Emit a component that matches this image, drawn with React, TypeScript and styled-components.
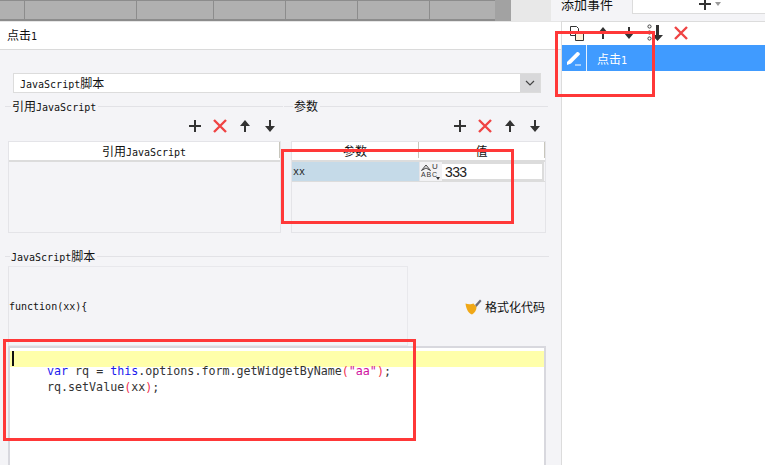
import React from 'react';
import styled, { createGlobalStyle } from 'styled-components';

const GlobalStyle = createGlobalStyle`
  html, body {
    margin: 0;
    padding: 0;
    background: #fff;
  }
  * {
    box-sizing: border-box;
  }
`;

const rulerCells = [25, 112, 77, 72, 72, 72, 65];

const PlusIcon = () => (
  <svg width='16' height='16' viewBox='0 0 16 16'>
    <path d='M2 8h12M8 2v12' stroke='#333' strokeWidth='2' fill='none' />
  </svg>
);

const CrossIcon = () => (
  <svg width='16' height='16' viewBox='0 0 16 16'>
    <path d='M2 2l12 12M14 2L2 14' stroke='#ef4444' strokeWidth='2.4' fill='none' />
  </svg>
);

const UpIcon = () => (
  <svg width='16' height='16' viewBox='0 0 16 16'>
    <path d='M8 2l5 6H9v6H7V8H3z' fill='#333' />
  </svg>
);

const DownIcon = () => (
  <svg width='16' height='16' viewBox='0 0 16 16'>
    <path d='M7 2h2v6h4l-5 6-5-6h4z' fill='#333' />
  </svg>
);

const CopyIcon = () => (
  <svg width='16' height='16' viewBox='0 0 16 16'>
    <path d='M1.5 1.5h6l2 2v7h-8z' fill='#fff' stroke='#333' />
    <path d='M6.5 6.5h8v9h-8z' fill='#fdf1d8' stroke='#333' />
  </svg>
);

const BottomIcon = () => (
  <svg width='16' height='18' viewBox='0 0 16 18'>
    <circle cx='2.5' cy='2.5' r='1.6' fill='none' stroke='#444' />
    <circle cx='2.5' cy='8.5' r='1.6' fill='none' stroke='#444' />
    <circle cx='2.5' cy='14.5' r='1.6' fill='none' stroke='#444' />
    <path d='M9 1h3v10h4l-5.5 6L5 11h4z' fill='#333' />
  </svg>
);

const PenIcon = () => (
  <svg width='16' height='16' viewBox='0 0 16 16'>
    <path d='M1 12L10.5 2.5c1-1 3.6 0 3.4 2L5 13.6 1 15z' fill='#fff' />
    <path d='M9 15h6' stroke='#fff' strokeWidth='1' />
  </svg>
);

const ChevronIcon = () => (
  <svg width='10' height='6' viewBox='0 0 10 6'>
    <path d='M1 1l4 4 4-4' stroke='#444' strokeWidth='1.2' fill='none' />
  </svg>
);

const BroomIcon = () => (
  <svg width='17' height='17' viewBox='0 0 17 17'>
    <path d='M10 7l5-5.5 1.5 1.5L11.5 9z' fill='#6d6d78' />
    <path d='M0.5 5.5C4 7 7 6 8.5 5.5l3 3.5c0 3-1.5 6-4.5 7.5C4 16 1 11 0.5 5.5z' fill='#f0a818' />
  </svg>
);

const App = () => {
  return (
    <Page>
      <GlobalStyle />
      <TopStrip>
        <Ruler>
          {rulerCells.map((width, index) => (
            <RulerCell key={index} $width={width} />
          ))}
        </Ruler>
        <DarkEnd />
        <LightEnd />
        <TabArea>
          <TabRow>
            <TabTitle>添加事件</TabTitle>
            <TabAdd>
              <PlusIcon />
              <TabCaret />
            </TabAdd>
          </TabRow>
        </TabArea>
      </TopStrip>

      <Body>
        <MainPanel>
          <TitleRow>
            点击<Mono>1</Mono>
          </TitleRow>

          <Form>
            <Dropdown>
              <DropdownText>
                <Mono>JavaScript</Mono>脚本
              </DropdownText>
              <DropdownArrow>
                <ChevronIcon />
              </DropdownArrow>
            </Dropdown>

            <Columns>
              <Column>
                <SectionTitle $lead={6}>
                  <span>
                    引用<Mono>JavaScript</Mono>
                  </span>
                </SectionTitle>
                <Toolbar>
                  <PlusIcon />
                  <CrossIcon />
                  <UpIcon />
                  <DownIcon />
                </Toolbar>
                <Table $left={3}>
                  <TableHead>
                    <HeadCell $flex={1}>
                      <span>
                        引用<Mono>JavaScript</Mono>
                      </span>
                    </HeadCell>
                  </TableHead>
                </Table>
              </Column>

              <Column>
                <SectionTitle $lead={9}>
                  <span>参数</span>
                </SectionTitle>
                <Toolbar>
                  <PlusIcon />
                  <CrossIcon />
                  <UpIcon />
                  <DownIcon />
                </Toolbar>
                <Table $left={7}>
                  <TableHead>
                    <HeadCell $width={127}>参数</HeadCell>
                    <HeadCell $width={126}>值</HeadCell>
                  </TableHead>
                  <ParamRow>
                    <ParamName>
                      <Mono>xx</Mono>
                    </ParamName>
                    <TypeCell>
                      <TypeTop>
                        <svg width='11' height='7' viewBox='0 0 11 7'>
                          <path d='M0.5 6.5L5 1l4.5 5.5L5 4z' fill='none' stroke='#444' />
                        </svg>
                        <span>U</span>
                      </TypeTop>
                      <TypeText>ABC</TypeText>
                      <TypeCaret />
                    </TypeCell>
                    <ParamValue>333</ParamValue>
                  </ParamRow>
                </Table>
              </Column>
            </Columns>

            <ScriptTitle $lead={5}>
              <span>
                <Mono>JavaScript</Mono>脚本
              </span>
            </ScriptTitle>

            <ScriptHead>
              <FunctionBox>
                <Mono>function(xx){'{'}</Mono>
              </FunctionBox>
              <FormatButton>
                <BroomIcon />
                格式化代码
              </FormatButton>
            </ScriptHead>

            <Editor>
              <ActiveLine>
                <Cursor />
              </ActiveLine>
              <CodeLine>
                <Keyword>var</Keyword> rq = <Keyword>this</Keyword>.options.form.getWidgetByName
                <Paren>(</Paren>
                <Str>"aa"</Str>
                <Paren>)</Paren>;
              </CodeLine>
              <CodeLine>
                rq.setValue<Paren>(</Paren>xx<Paren>)</Paren>;
              </CodeLine>
            </Editor>
          </Form>
        </MainPanel>

        <SidePanel>
          <SideToolbar>
            <CopyIcon />
            <UpIcon />
            <DownIcon />
            <BottomIcon />
            <CrossIcon />
          </SideToolbar>
          <EventRow>
            <EventIcon>
              <PenIcon />
            </EventIcon>
            <EventName>
              点击<Mono>1</Mono>
            </EventName>
          </EventRow>
        </SidePanel>
      </Body>

      <RedMark $x={555} $y={31} $w={100} $h={66} />
      <RedMark $x={281} $y={149} $w={233} $h={75} />
      <RedMark $x={3} $y={339} $w={413} $h={102} />
    </Page>
  );
};

const Page = styled.div`
  position: relative;
  width: 765px;
  height: 465px;
  overflow: hidden;
  display: flex;
  flex-direction: column;
  background: #fff;
  color: #111;
  font-family: 'Noto Sans CJK SC', 'Liberation Sans', sans-serif;
  font-size: 12px;
`;

const Mono = styled.span`
  font-family: 'DejaVu Sans Mono', monospace;
  font-size: 10px;
`;

const TopStrip = styled.div`
  display: flex;
  height: 21px;
  flex-shrink: 0;
`;

const Ruler = styled.div`
  display: flex;
  width: 495px;
  background: #b0b0b0;
  border-top: 1px solid #8c8c8c;
  border-bottom: 2px solid #8c8c8c;
`;

const RulerCell = styled.div<{ $width: number }>`
  width: ${({ $width }) => $width}px;
  height: 100%;
  border-right: 1px solid #8c8c8c;
  &:last-child {
    border-right: none;
  }
`;

const DarkEnd = styled.div`
  width: 16px;
  background: #a2a2a2;
`;

const LightEnd = styled.div`
  width: 40px;
  background: #e8e8e8;
`;

const TabArea = styled.div`
  flex: 1;
  background: #f4f4f7;
  overflow: hidden;
`;

const TabRow = styled.div`
  display: flex;
  height: 14px;
`;

const TabTitle = styled.div`
  width: 81px;
  padding-left: 10px;
  font-size: 13px;
  line-height: 8px;
`;

const TabAdd = styled.div`
  flex: 1;
  display: flex;
  justify-content: center;
  align-items: flex-end;
  gap: 2px;
  background: #fff;
  border-left: 1px solid #dcdcdc;
  border-bottom: 1px solid #dcdcdc;
  padding-left: 20px;
  padding-bottom: 1px;
  overflow: hidden;
`;

const TabCaret = styled.div`
  width: 0;
  height: 0;
  margin-bottom: 6px;
  border-left: 3px solid transparent;
  border-right: 3px solid transparent;
  border-top: 4px solid #999;
`;

const Body = styled.div`
  flex: 1;
  display: flex;
  min-height: 0;
`;

const MainPanel = styled.div`
  width: 561px;
  display: flex;
  flex-direction: column;
  background: #f4f4f7;
`;

const TitleRow = styled.div`
  height: 29px;
  padding-left: 7px;
  line-height: 25px;
  background: #fff;
  border-top: 1px solid #e6e6e6;
  border-bottom: 1px solid #dadada;
`;

const Form = styled.div`
  flex: 1;
  display: flex;
  flex-direction: column;
  padding: 23px 12px 0 5px;
  min-height: 0;
`;

const Dropdown = styled.div`
  display: flex;
  height: 20px;
  margin-left: 8px;
  margin-right: 8px;
  background: #fff;
  border: 1px solid #dcdcdc;
`;

const DropdownText = styled.div`
  flex: 1;
  padding-left: 6px;
  line-height: 17px;
`;

const DropdownArrow = styled.div`
  width: 20px;
  display: flex;
  align-items: center;
  justify-content: center;
  background: #d8d8da;
`;

const Columns = styled.div`
  display: grid;
  grid-template-columns: 279px 265px;
  margin-top: 6px;
`;

const Column = styled.div`
  display: flex;
  flex-direction: column;
`;

const SectionTitle = styled.div<{ $lead: number }>`
  display: flex;
  align-items: center;
  height: 14px;
  padding-right: 1px;
  & > span {
    margin-top: -2px;
  }
  &::before {
    content: '';
    width: ${({ $lead }) => $lead}px;
    height: 1px;
    margin-right: 1px;
    background: #e2e2e6;
  }
  &::after {
    content: '';
    flex: 1;
    height: 1px;
    margin-left: 2px;
    background: #e2e2e6;
  }
`;

const Toolbar = styled.div`
  display: flex;
  justify-content: flex-end;
  gap: 9px;
  height: 16px;
  margin-top: 5px;
  padding-right: 6px;
`;

const Table = styled.div<{ $left: number }>`
  height: 92px;
  margin: 7px 3px 0 ${({ $left }) => $left}px;
  border: 1px solid #e4e4e8;
`;

const TableHead = styled.div`
  display: flex;
  height: 20px;
  background: #fff;
  border-bottom: 2px solid #dcdcdc;
`;

const HeadCell = styled.div<{ $width?: number; $flex?: number }>`
  ${({ $width }) => ($width ? `width: ${$width}px;` : '')}
  ${({ $flex }) => ($flex ? `flex: ${$flex};` : '')}
  display: flex;
  align-items: center;
  justify-content: center;
  border-right: 1px solid #c8c6bc;
  height: 16px;
`;

const ParamRow = styled.div`
  display: flex;
  height: 20px;
  border-bottom: 1px solid #dcdcdc;
`;

const ParamName = styled.div`
  width: 127px;
  padding-left: 1px;
  display: flex;
  align-items: center;
  background: #c5dae8;
  color: #222;
`;

const TypeCell = styled.div`
  position: relative;
  width: 23px;
  padding: 1px 0 0 1px;
  background: #f2f2f4;
  border-left: 1px solid #e4e4e8;
`;

const TypeTop = styled.div`
  display: flex;
  align-items: flex-end;
  height: 8px;
  font-family: 'Liberation Sans', sans-serif;
  font-size: 8px;
  line-height: 8px;
  color: #333;
`;

const TypeText = styled.div`
  font-family: 'Liberation Sans', sans-serif;
  font-size: 7px;
  line-height: 8px;
  letter-spacing: 0.8px;
  color: #333;
`;

const TypeCaret = styled.div`
  position: absolute;
  right: 2px;
  bottom: 1px;
  width: 0;
  height: 0;
  border-left: 2.5px solid transparent;
  border-right: 2.5px solid transparent;
  border-top: 3px solid #333;
`;

const ParamValue = styled.div`
  flex: 1;
  margin-right: 1px;
  padding-left: 3px;
  display: flex;
  align-items: center;
  background: #fff;
  border: 2px solid #dcdcdc;
  border-left: none;
  font-family: 'Liberation Sans', sans-serif;
  font-size: 14px;
  letter-spacing: -0.6px;
  color: #222;
`;

const ScriptTitle = styled(SectionTitle)`
  margin-top: 16px;
  padding-right: 0;
`;

const ScriptHead = styled.div`
  display: flex;
  align-items: center;
  margin: 3px 3px 0 3px;
  height: 80px;
`;

const FunctionBox = styled.div`
  width: 400px;
  height: 80px;
  display: flex;
  align-items: center;
  border: 1px solid #e8e8ec;
  border-left-color: #e4e4e8;
`;

const FormatButton = styled.div`
  margin-left: auto;
  margin-right: 1px;
  display: flex;
  align-items: center;
  gap: 3px;
  font-size: 12px;
`;

const Editor = styled.div`
  flex: 1;
  margin: 0 3px;
  padding-top: 3px;
  background: #fff;
  border: 2px solid #d8d8de;
  border-bottom: none;
  font-family: 'DejaVu Sans Mono', monospace;
  font-size: 11.67px;
  line-height: 16px;
  color: #333;
`;

const ActiveLine = styled.div`
  height: 16px;
  margin-bottom: -4px;
  padding-left: 2px;
  background: #ffffaa;
`;

const Cursor = styled.div`
  width: 2px;
  height: 15px;
  background: #111;
`;

const CodeLine = styled.div`
  position: relative;
  padding-left: 37px;
  white-space: pre;
`;

const Keyword = styled.span`
  color: #1a1aee;
`;

const Paren = styled.span`
  color: #f03050;
`;

const Str = styled.span`
  color: #d010a0;
`;

const SidePanel = styled.div`
  flex: 1;
  background: #fff;
  border-left: 1px solid #dcdcdc;
  border-top: 1px solid #dcdcdc;
`;

const SideToolbar = styled.div`
  display: flex;
  align-items: center;
  gap: 10px;
  height: 23px;
  padding-left: 7px;
  padding-bottom: 1px;
`;

const EventRow = styled.div`
  display: flex;
  align-items: center;
  height: 26px;
  background: #409bff;
  color: #fff;
`;

const EventIcon = styled.div`
  width: 25px;
  height: 100%;
  display: flex;
  align-items: center;
  justify-content: center;
  border-right: 1px solid #e8f2ff;
`;

const EventName = styled.div`
  padding-left: 10px;
`;

const RedMark = styled.div<{ $x: number; $y: number; $w: number; $h: number }>`
  position: absolute;
  left: ${({ $x }) => $x}px;
  top: ${({ $y }) => $y}px;
  width: ${({ $w }) => $w}px;
  height: ${({ $h }) => $h}px;
  border: 3px solid #ff3838;
  pointer-events: none;
`;

export default App;
